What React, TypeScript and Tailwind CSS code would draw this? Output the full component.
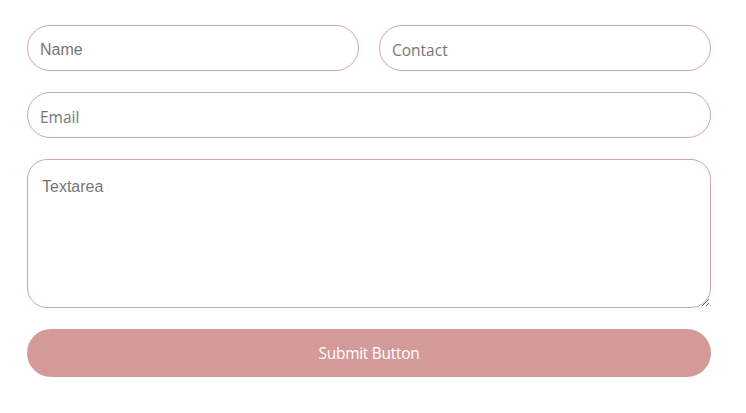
const inputCls =
  "h-[46px] w-full rounded-full border border-[#cfa3aa] bg-white px-3 pt-[3px] text-[16px] text-[#444] placeholder:text-[#767676] outline-none";

export default function App() {
  return (
    <div className="min-h-[413px] w-[746px] bg-white pt-[25px] pl-[27px]">
      <form className="flex w-[684px] flex-col gap-[21px]" onSubmit={(e) => e.preventDefault()}>
        <div className="flex gap-[20px]">
          <input
            placeholder="Name"
            className={`${inputCls} font-['Liberation_Sans',sans-serif]`}
          />
          <input
            placeholder="Contact"
            className={`${inputCls} font-['Open_Sans',sans-serif] !text-[15.5px]`}
          />
        </div>
        <input
          placeholder="Email"
          className={`${inputCls} font-['Open_Sans',sans-serif] !text-[15.5px]`}
        />
        <textarea
          placeholder="Textarea"
          className="h-[149px] w-full rounded-[20px] border border-[#cfa3aa] bg-white px-[14px] pt-[18px] pb-[16px] text-[16px] leading-[18px] text-[#444] placeholder:text-[#767676] outline-none font-['Liberation_Sans',sans-serif]"
        />
        <button
          type="submit"
          className="h-[48px] w-full rounded-full bg-[#d49a99] pt-[2px] text-[15.5px] text-white font-['Open_Sans',sans-serif] tracking-[-0.3px]"
        >
          Submit Button
        </button>
      </form>
    </div>
  );
}
